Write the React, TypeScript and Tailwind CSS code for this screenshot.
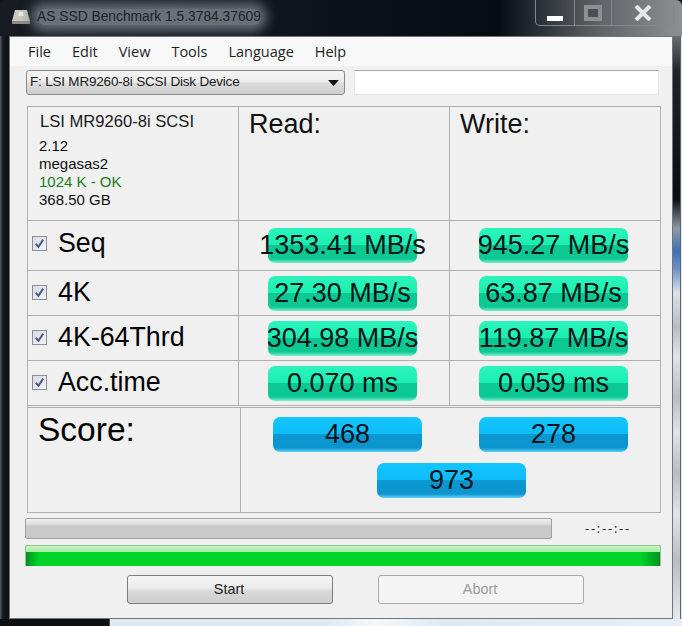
import React from "react";

const sans = "font-['Liberation_Sans',Arial,sans-serif]";

function Pill({ text, blue }: { text: string; blue?: boolean }) {
  return (
    <div
      className={`w-[149px] h-[35px] shrink-0 rounded-[7px] flex items-center justify-center whitespace-nowrap text-[27px] leading-none text-[#0a1418] ${
        blue
          ? "bg-[linear-gradient(180deg,#13c6ff_0%,#0dbcfb_48%,#0b97d0_50%,#0b95cf_88%,#5fd0f7_100%)]"
          : "bg-[linear-gradient(180deg,#2cf5bb_0%,#1ceeb0_48%,#0cc993_50%,#0cc893_88%,#7ef0cf_100%)]"
      }`}
    >
      {text}
    </div>
  );
}

function Check() {
  return (
    <div className="w-[15px] h-[15px] border border-[#8c8f96] bg-[linear-gradient(135deg,#d8dbe4,#f3f4f8)] flex items-center justify-center shrink-0">
      <svg width="11" height="11" viewBox="0 0 11 11">
        <path d="M1.8 5.6 L4.4 8.8 L9.2 1.6" fill="none" stroke="#4a5a8c" strokeWidth="2" />
      </svg>
    </div>
  );
}

function Row({ label, read, write, h, lift }: { label: string; read: string; write: string; h: string; lift: string }) {
  return (
    <div className={`flex ${h} border-b border-[#aeaeae]`}>
      <div className={`w-[211px] border-r border-[#aeaeae] flex items-center pl-[4px] gap-[11px] text-[26.8px] text-black ${lift}`}>
        <Check />
        <span>{label}</span>
      </div>
      <div className="w-[211px] border-r border-[#aeaeae] flex items-center pl-[29px]">
        <Pill text={read} />
      </div>
      <div className="flex-1 flex items-center pl-[29px]">
        <Pill text={write} />
      </div>
    </div>
  );
}

export default function App() {
  return (
    <div className={`${sans} w-[682px] h-[626px] overflow-hidden flex flex-col bg-[#11161d]`}>
      <div className="h-[36px] shrink-0 flex items-start justify-between pl-[11px] pr-[8px] rounded-t-[6px] bg-[linear-gradient(90deg,#171c22_0%,#10151d_40%,#070b12_73%,#252a30_78%,#606468_88%,#8d9093_100%)]">
        <div className="flex items-center gap-[6px] h-[28px] mt-[3px]">
          <svg width="20" height="16" viewBox="0 0 20 16">
            <path d="M4 1 H16 L19 12 V15 H1 V12 Z" fill="#c9c7c0" />
            <path d="M1 12 H19 V15 H1 Z" fill="#8f8c85" />
            <path d="M8 3 H12 L12.5 7 H7.5 Z" fill="#e9e8e3" />
          </svg>
          <span className="text-[13.8px] leading-[16px] text-[#1d2126] bg-[#687078] rounded-[8px] shadow-[0_0_12px_6px_#687078]">
            AS SSD Benchmark 1.5.3784.37609
          </span>
        </div>
        <div className="flex h-[26px] w-[139px] border border-t-0 border-[#82878c] rounded-b-[5px]">
          <div className="w-[39px] border-r border-[#82878c] flex justify-center pt-[16px]">
            <div className="w-[16px] h-[5px] bg-white" />
          </div>
          <div className="w-[37px] border-r border-[#82878c] flex justify-center pt-[5px]">
            <div className="w-[18px] h-[16px] border-[4px] border-[#8d9093] bg-[#4b4f53]" />
          </div>
          <div className="flex-1 flex justify-center pt-[5px]">
            <svg width="18" height="16" viewBox="0 0 18 16">
              <path d="M2 1 L16 15 M16 1 L2 15" stroke="#e8e8e8" strokeWidth="4" />
            </svg>
          </div>
        </div>
      </div>

      <div className="flex h-[583px] shrink-0">
        <div className="w-[9px] shrink-0 bg-[linear-gradient(90deg,#5c6066_0%,#171b20_30%,#0c1015_100%)]" />
        <div className="w-[664px] shrink-0 bg-[#f0f0f0] border border-[#6f757b] flex flex-col">
          <div className="h-[29px] shrink-0 flex items-center gap-[21px] pl-[18px] bg-[#f8f8f8] font-['Open_Sans',sans-serif] text-[14.5px] text-[#1e1e1e]">
            <span>File</span>
            <span>Edit</span>
            <span>View</span>
            <span>Tools</span>
            <span>Language</span>
            <span>Help</span>
          </div>

          <div className="flex mt-[4px] ml-[16px] gap-[9px] h-[25px] shrink-0">
            <div className="w-[319px] rounded-[3px] border border-[#8a8a8a] bg-[linear-gradient(180deg,#f4f4f4_0%,#ececec_48%,#dcdcdc_52%,#cfcfcf_100%)] flex items-center justify-between pl-[3px] pr-[5px] text-[13.5px] tracking-[-0.2px] text-[#1a1a1a]">
              <span>F: LSI MR9260-8i SCSI Disk Device</span>
              <svg width="11" height="6" viewBox="0 0 11 6">
                <path d="M0 0 H11 L5.5 6 Z" fill="#111" />
              </svg>
            </div>
            <div className="w-[305px] bg-white border border-[#e4e4e4] border-t-[#a9a9a9]" />
          </div>

          <div className="ml-[17px] mt-[11px] w-[634px] h-[407px] shrink-0 border border-[#aeaeae] flex flex-col">
            <div className="flex h-[114px] shrink-0 border-b border-[#aeaeae]">
              <div className="w-[211px] border-r border-[#aeaeae] pl-[11px] pt-[5px] text-black">
                <div className="text-[16.6px] leading-[20px] mb-[5px] ml-[1px] text-[#1a1a1a]">LSI MR9260-8i SCSI</div>
                <div className="text-[15px] leading-[18px] text-[#111]">
                  <div>2.12</div>
                  <div>megasas2</div>
                  <div className="text-[#1e7d1e]">1024 K - OK</div>
                  <div>368.50 GB</div>
                </div>
              </div>
              <div className="w-[211px] border-r border-[#aeaeae] pl-[10px] pt-[1px] text-[27px] leading-[33px] text-[#111]">Read:</div>
              <div className="flex-1 pl-[10px] pt-[1px] text-[27px] leading-[33px] text-[#111]">Write:</div>
            </div>
            <Row label="Seq" read="1353.41 MB/s" write="945.27 MB/s" h="h-[50px] shrink-0" lift="pb-[4px]" />
            <Row label="4K" read="27.30 MB/s" write="63.87 MB/s" h="h-[45px] shrink-0" lift="pb-[2px]" />
            <Row label="4K-64Thrd" read="304.98 MB/s" write="119.87 MB/s" h="h-[45px] shrink-0" lift="pb-[1px]" />
            <Row label="Acc.time" read="0.070 ms" write="0.059 ms" h="h-[45px] shrink-0" lift="pb-[1px]" />
            <div className="flex flex-1 border-t border-[#aeaeae] mt-[1px]">
              <div className="w-[213px] border-r border-[#aeaeae] pl-[10px] pt-[2px] text-[33.5px] leading-[40px] text-black">Score:</div>
              <div className="flex-1 flex flex-col pt-[9px]">
                <div className="flex pl-[32px] gap-[57px]">
                  <Pill text="468" blue />
                  <Pill text="278" blue />
                </div>
                <div className="flex pl-[136px] mt-[11px]">
                  <Pill text="973" blue />
                </div>
              </div>
            </div>
          </div>

          <div className="flex items-center ml-[15px] mt-[4px] h-[22px] shrink-0">
            <div className="w-[527px] h-[21px] rounded-[2px] border border-[#a0a0a0] bg-[linear-gradient(180deg,#f2f2f2_0%,#dedede_25%,#c9c9c9_40%,#c8c8c8_100%)]" />
            <div className="ml-[33px] text-[13px] mt-[1px] tracking-[1.75px] text-[#222] font-['Open_Sans',sans-serif]">--:--:--</div>
          </div>

          <div className="ml-[15px] mt-[6px] w-[636px] h-[21px] shrink-0 border border-[#9ac09a] border-b-0 bg-[linear-gradient(180deg,#c5f5c0_0%,#a8eda5_28%,#00d428_30%,#00d428_100%)]">
            <div className="h-full bg-[linear-gradient(90deg,#059020_0%,transparent_2%,transparent_97%,#059020_100%)] mask-[linear-gradient(180deg,transparent_30%,#000_30%)]" />
          </div>

          <div className="flex ml-[117px] mt-[9px] gap-[45px] shrink-0">
            <div className="w-[206px] h-[29px] pr-[2px] rounded-[3px] border border-[#7d7d7d] bg-[linear-gradient(180deg,#f4f4f4_0%,#ebebeb_45%,#dadada_55%,#cdcdcd_100%)] flex items-center justify-center text-[14.4px] text-[#1a1a1a]">
              Start
            </div>
            <div className="w-[206px] h-[29px] pr-[2px] rounded-[3px] border border-[#ababab] bg-[#f4f4f4] flex items-center justify-center text-[14.4px] text-[#9c9c9c]">
              Abort
            </div>
          </div>
        </div>
        <div className="flex-1 flex">
          <div className="w-[7px] bg-[linear-gradient(180deg,#6a6e72_0%,#202429_6%,#0a0e13_28%,#8f9aa5_33%,#3f6fb8_37%,#6f92c8_40%,#d9e2ea_44%,#b9bec4_50%,#dfe4e9_55%,#b9bec4_62%,#dfe4e9_68%,#b9bec4_75%,#dfe4e9_82%,#b9bec4_90%,#e6eaee_100%)]" />
          <div className="w-[1px] bg-[#5f6468]" />
          <div className="w-[1px] bg-[#e4e8ec]" />
        </div>
      </div>

      <div className="flex-1 bg-[linear-gradient(90deg,#0c1015_0%,#0c1015_16%,#dfe9f2_16.2%,#dfe9f2_48%,#f4f8fb_55%,#dfe9f2_65%,#e6eef5_100%)]" />
    </div>
  );
}
